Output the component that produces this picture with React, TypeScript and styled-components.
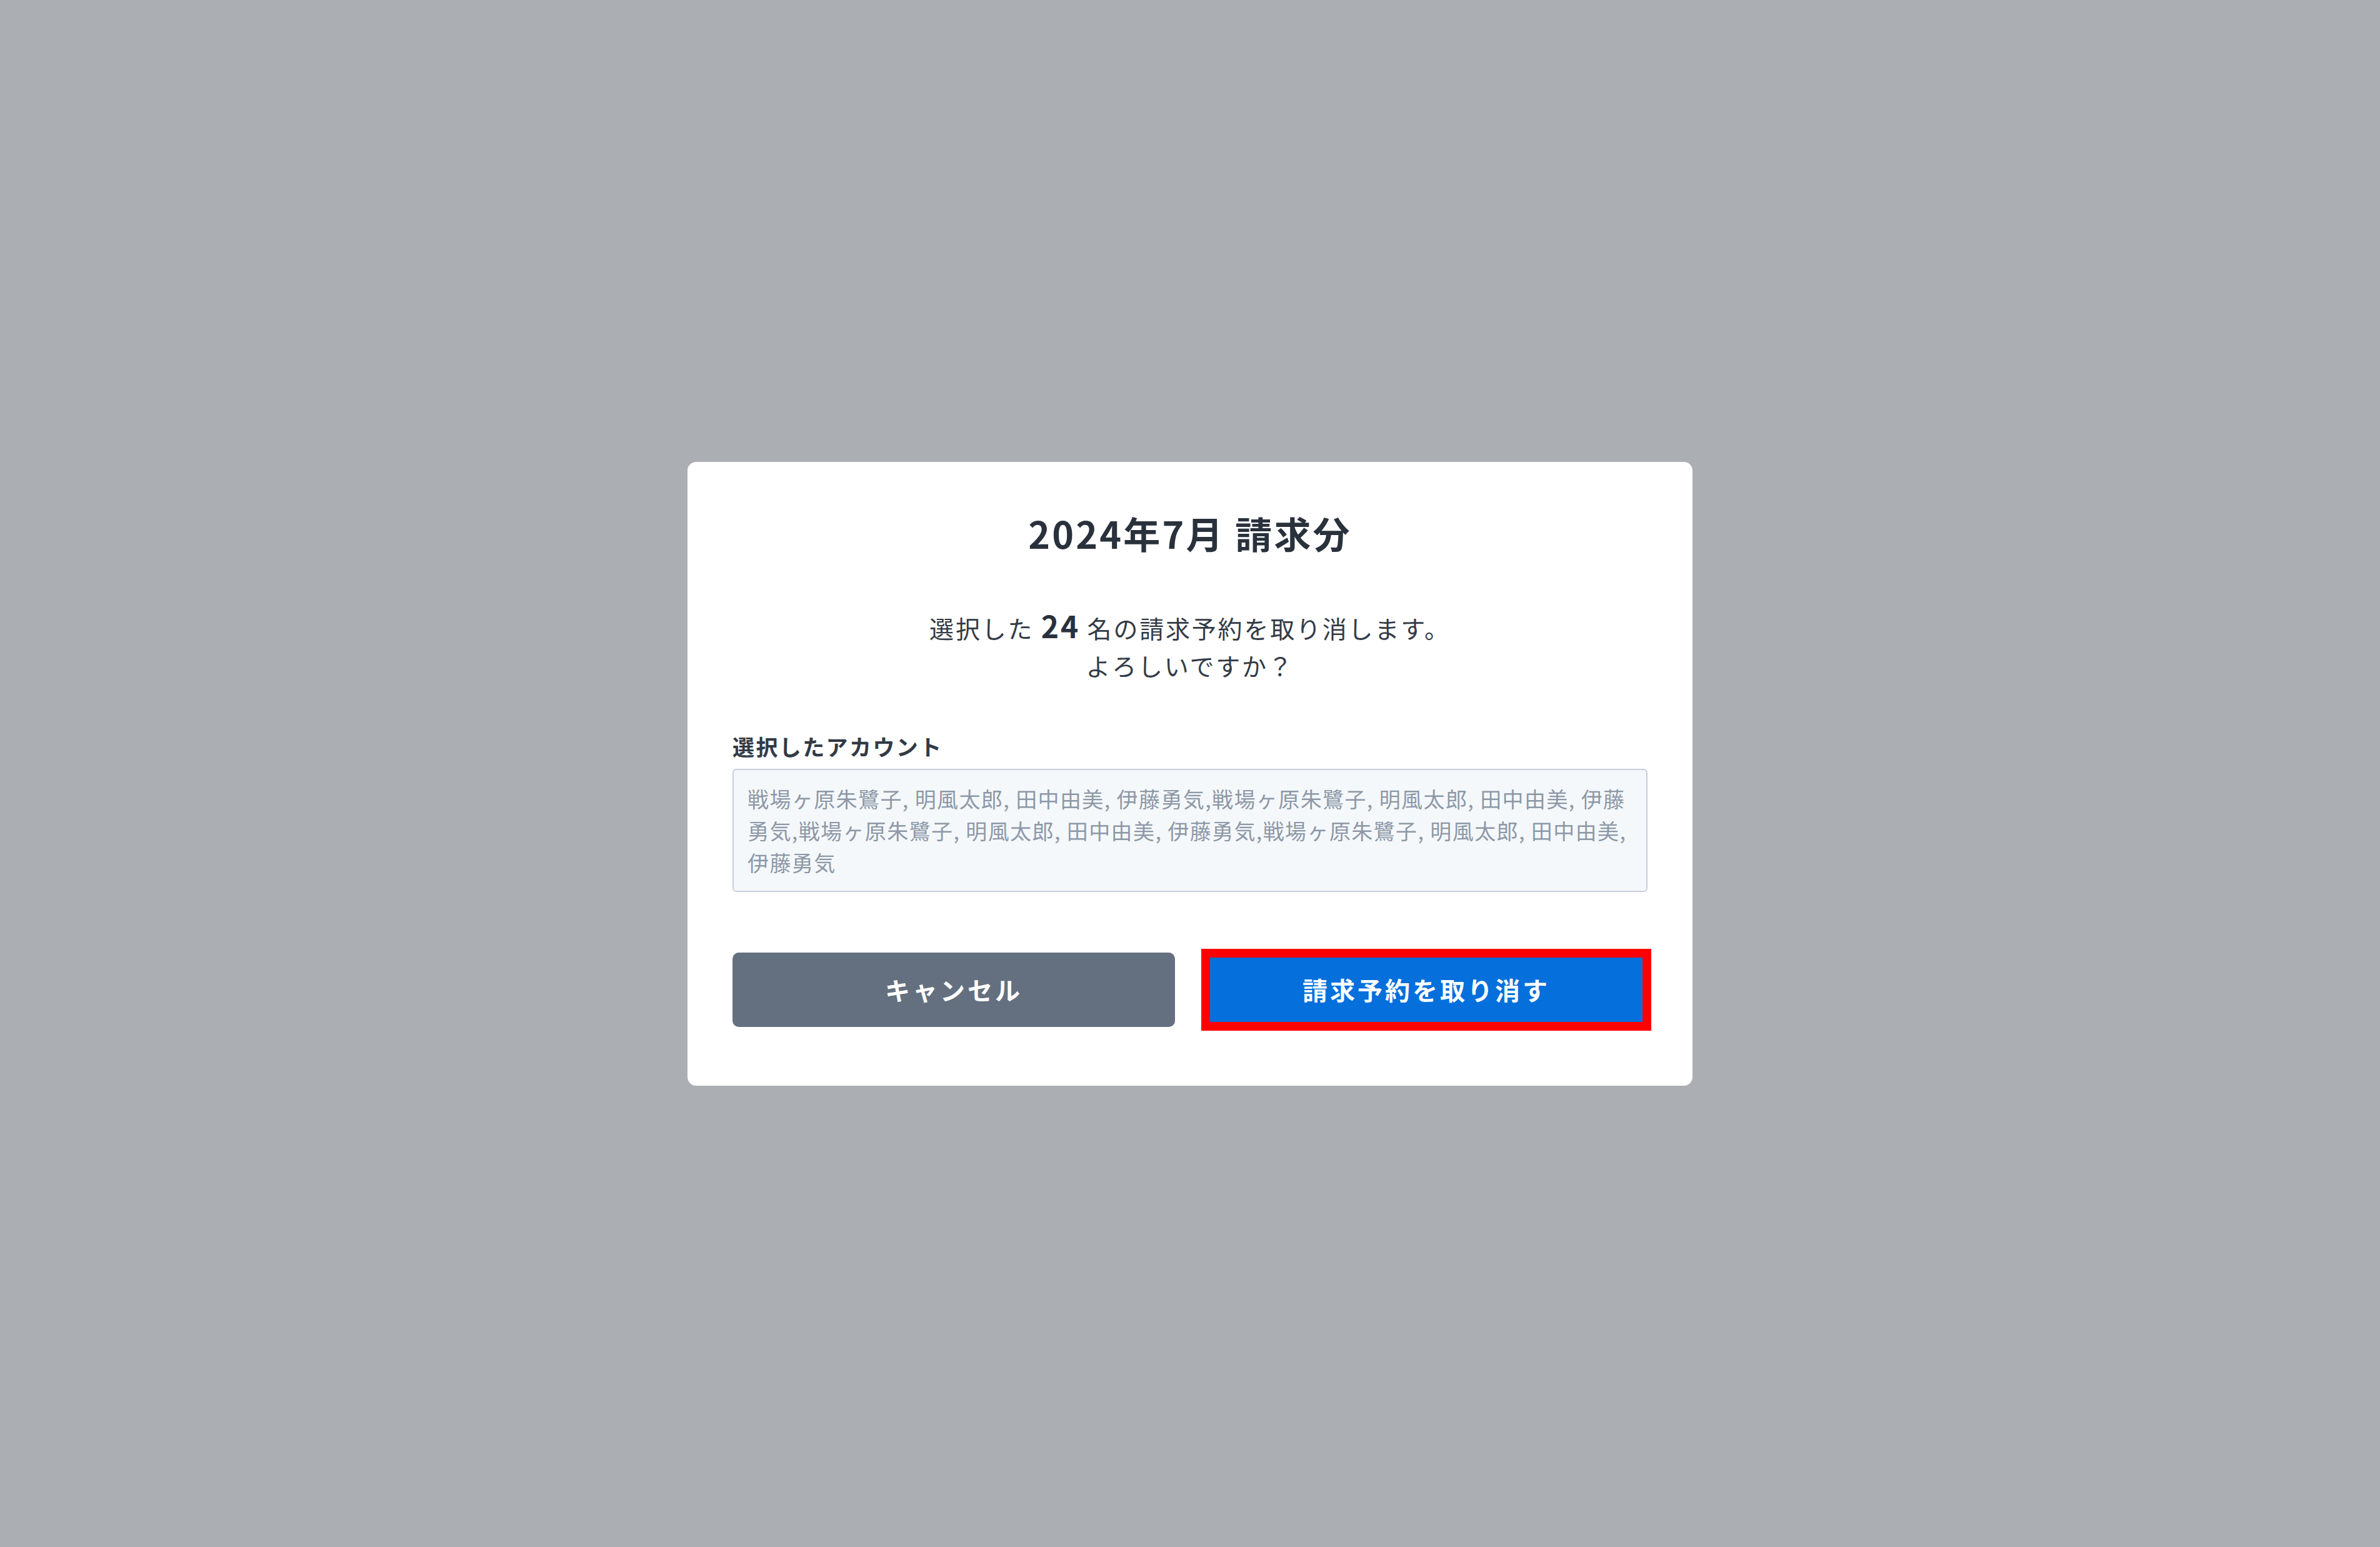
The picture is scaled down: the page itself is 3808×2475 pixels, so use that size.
import React from "react";
import styled, { createGlobalStyle } from "styled-components";

const GlobalStyle = createGlobalStyle`
  html, body {
    margin: 0;
    padding: 0;
    background: #abaeb3;
  }
  body {
    font-family: "Noto Sans CJK JP", "Noto Sans", sans-serif;
    color: #2d3540;
  }
  * {
    box-sizing: border-box;
  }
`;

const accounts = Array.from({ length: 4 })
  .map(() => "戦場ヶ原朱鷺子, 明風太郎, 田中由美, 伊藤勇気")
  .join(",");

export default function App() {
  return (
    <>
      <GlobalStyle />
      <Backdrop>
        <Modal>
          <Title>2024年7月 請求分</Title>
          <Message>
            選択した <Count>24</Count> 名の請求予約を取り消します。
            <br />
            よろしいですか？
          </Message>
          <Field>
            <Label>選択したアカウント</Label>
            <AccountList>{accounts}</AccountList>
          </Field>
          <Actions>
            <Button variant="secondary">キャンセル</Button>
            <Button variant="primary">
              請求予約を取り消す
              <Highlight />
            </Button>
          </Actions>
        </Modal>
      </Backdrop>
    </>
  );
}

const Backdrop = styled.div`
  width: 100vw;
  height: 100vh;
  display: flex;
  align-items: center;
  justify-content: center;
`;

const Modal = styled.div`
  width: 1608px;
  background: #ffffff;
  border-radius: 14px;
  padding: 73px 72px 94px;
  display: flex;
  flex-direction: column;
`;

const Title = styled.h2`
  margin: 0;
  text-align: center;
  font-size: 59px;
  line-height: 81px;
  font-weight: 700;
  letter-spacing: 3.2px;
  color: #29313c;
`;

const Message = styled.p`
  margin: 77px 0 0;
  text-align: center;
  font-size: 39px;
  line-height: 60px;
  letter-spacing: 2.8px;
  color: #333b46;
`;

const Count = styled.strong`
  font-size: 48px;
  font-weight: 700;
  color: #29313c;
`;

const Field = styled.div`
  margin-top: 74px;
  display: flex;
  flex-direction: column;
  gap: 10px;
`;

const Label = styled.div`
  font-size: 35px;
  line-height: 52px;
  font-weight: 700;
  letter-spacing: 2.4px;
  color: #323a45;
`;

const AccountList = styled.div`
  background: #f5f8fb;
  border: 2px solid #c6d0db;
  border-radius: 6px;
  padding: 20px 22px;
  font-size: 34px;
  line-height: 51px;
  letter-spacing: 1.4px;
  color: #8d98a7;
  word-break: break-all;
`;

const Actions = styled.div`
  margin-top: 97px;
  display: grid;
  grid-template-columns: 1fr 1fr;
  gap: 48px;
`;

const Button = styled.button<{ variant: "primary" | "secondary" }>`
  position: relative;
  height: 119px;
  border: none;
  border-radius: 10px;
  font-family: inherit;
  font-size: 40px;
  font-weight: 700;
  letter-spacing: 4px;
  color: #ffffff;
  background: ${(p) => (p.variant === "primary" ? "#056fdc" : "#64707f")};
  cursor: pointer;
`;

const Highlight = styled.span`
  position: absolute;
  inset: -6px;
  border: 14px solid #ff0000;
  pointer-events: none;
`;
